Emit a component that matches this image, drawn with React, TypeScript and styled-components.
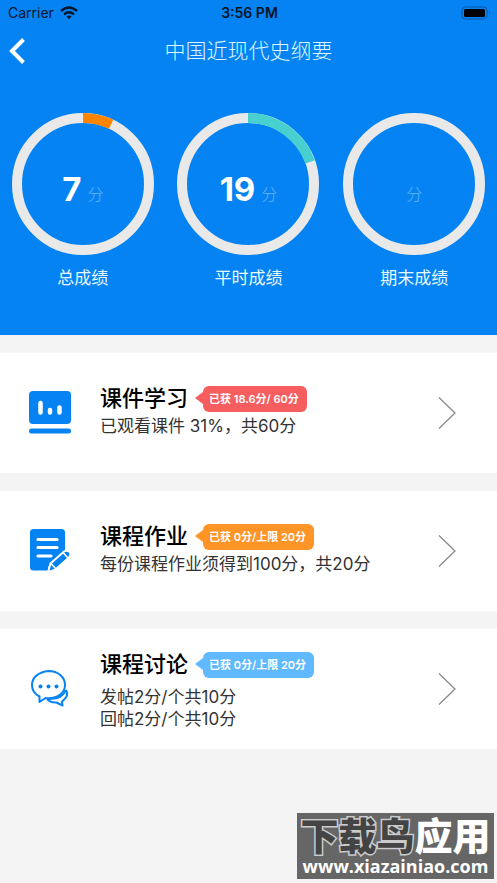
import React from "react";
import styled, { createGlobalStyle } from "styled-components";

const BLUE = "#0683f3";

const GlobalStyle = createGlobalStyle`
  * { box-sizing: border-box; }
  body {
    margin: 0;
    background: #f4f4f4;
    font-family: Inter, "Noto Sans CJK SC", sans-serif;
  }
`;

const Page = styled.div`
  min-height: 100vh;
  background: #f4f4f4;
`;

const Header = styled.header`
  background: ${BLUE};
  padding-bottom: 44px;
`;

const StatusBar = styled.div`
  display: grid;
  grid-template-columns: 1fr auto 1fr;
  align-items: center;
  height: 26px;
  padding: 0 6px 0 8px;
  color: #04152b;
  font-size: 14px;
  line-height: 20px;
`;

const Carrier = styled.div`
  display: flex;
  align-items: center;
  gap: 6px;
`;

const Clock = styled.time`
  font-weight: 600;
`;

const Battery = styled.svg`
  justify-self: end;
`;

const NavBar = styled.nav`
  display: grid;
  grid-template-columns: 40px 1fr 40px;
  align-items: center;
  height: 50px;
`;

const BackButton = styled.button`
  display: flex;
  align-items: center;
  height: 40px;
  padding: 0 0 0 8px;
  border: 0;
  background: none;
  cursor: pointer;
`;

const PageTitle = styled.h1`
  margin: 0;
  text-align: center;
  color: #dcf6ff;
  font-size: 21px;
  font-weight: 300;
  line-height: 30px;
`;

const Scores = styled.section`
  display: grid;
  grid-template-columns: repeat(3, 1fr);
  padding-top: 37px;
`;

const Score = styled.div`
  display: flex;
  flex-direction: column;
  align-items: center;
  gap: 10px;
`;

const Dial = styled.div`
  display: grid;
  place-items: center;
  > * { grid-area: 1 / 1; }
`;

const DialValue = styled.div`
  display: flex;
  align-items: flex-end;
  gap: 6px;
  min-height: 50px;
`;

const Points = styled.strong`
  color: #fff;
  font-size: 33px;
  font-weight: 700;
  line-height: 40px;
`;

const Unit = styled.span`
  color: #68b6fa;
  font-size: 16px;
  font-weight: 300;
  line-height: 30px;
`;

const ScoreLabel = styled.div`
  color: #e6f8ff;
  font-size: 17px;
  line-height: 26px;
`;

const List = styled.main`
  display: grid;
  gap: 18px;
  padding-top: 18px;
`;

const Card = styled.a`
  display: grid;
  grid-template-columns: 100px 1fr 59px;
  min-height: 120px;
  background: #fff;
  color: #333;
  text-decoration: none;
`;

const CardIcon = styled.div`
  display: grid;
  place-items: center;
`;

const CardBody = styled.div<{ $tall?: boolean }>`
  padding: ${(p) => (p.$tall ? "23px 0 18px" : "33px 0")};
`;

const CardArrow = styled.div`
  display: flex;
  align-items: center;
`;

const TitleRow = styled.div`
  display: flex;
  align-items: center;
  gap: 15px;
`;

const CardTitle = styled.h2`
  margin: 0;
  color: #000;
  font-size: 22px;
  font-weight: 500;
  line-height: 24px;
  padding-bottom: 2px;
`;

const Badge = styled.span<{ $color: string }>`
  position: relative;
  padding: 0 8px 0 6px;
  border-radius: 6px;
  background: ${(p) => p.$color};
  color: #fff;
  font-size: 11px;
  font-weight: 600;
  line-height: 26px;
  white-space: nowrap;
  &::before {
    content: "";
    position: absolute;
    right: 100%;
    top: 6px;
    border: solid transparent;
    border-width: 6px 8px 6px 0;
    border-right-color: ${(p) => p.$color};
  }
`;

const Details = styled.div<{ $tall?: boolean }>`
  padding-top: ${(p) => (p.$tall ? "8px" : "3px")};
  font-size: 17px;
  line-height: 22px;
`;

const Watermark = styled.aside`
  position: fixed;
  right: 3px;
  bottom: 4px;
  width: 197px;
  padding: 3px 0;
  background: #666;
  color: #fff;
  text-align: center;
  white-space: nowrap;
`;

const Brand = styled.div`
  font-size: 38px;
  font-weight: 900;
  line-height: 40px;
`;

const BrandDark = styled.span`
  color: #444;
  -webkit-text-stroke: 3px #ccc;
  paint-order: stroke fill;
`;

const Site = styled.div`
  font-family: "Open Sans", sans-serif;
  font-size: 18px;
  font-weight: 700;
  line-height: 20px;
`;

const RADIUS = 66;
const LENGTH = 2 * Math.PI * RADIUS;

function Ring({ percent, color }: { percent: number; color: string }) {
  return (
    <svg width="142" height="142" viewBox="0 0 142 142" fill="none" strokeWidth="10" aria-hidden="true">
      <circle cx="71" cy="71" r={RADIUS} stroke="#e9e9e9" />
      {percent > 0 && (
        <circle
          cx="71"
          cy="71"
          r={RADIUS}
          stroke={color}
          strokeDasharray={`${(LENGTH * percent) / 100} ${LENGTH}`}
          transform="rotate(-90 71 71)"
        />
      )}
    </svg>
  );
}

function CoursewareIcon() {
  return (
    <svg width="44" height="44" viewBox="0 0 44 44" aria-hidden="true">
      <rect x="1" y="0" width="42" height="33" rx="4" fill={BLUE} />
      <rect x="1" y="37.500" width="42" height="5" rx="2.500" fill={BLUE} />
      <g stroke="#fff" strokeWidth="4.500" strokeLinecap="round">
        <path d="M12.500 12v9.500M22 19v2.500M31.500 16.500v5" />
      </g>
    </svg>
  );
}

function HomeworkIcon() {
  return (
    <svg width="44" height="44" viewBox="0 0 44 44" aria-hidden="true">
      <path d="M5.500 0h28A3.500 3.500 0 0 1 37 3.500v21L20 38v3.500H5.500A3.500 3.500 0 0 1 2 38V3.500A3.500 3.500 0 0 1 5.500 0Z" fill={BLUE} />
      <path d="M10 10.500h19M10 18.500h19M10 27h13" stroke="#fff" strokeWidth="3.200" strokeLinecap="round" />
      <path d="M22.500 34.500 36 22.500q3.500-2 5.500.5t-.5 5.500L27.500 40.500 20 43.500Z" fill={BLUE} stroke="#fff" strokeWidth="2" />
      <path d="m35 23.500 5 5.500M23 34.500l5 5.500" stroke="#fff" strokeWidth="1.500" />
    </svg>
  );
}

function DiscussionIcon() {
  return (
    <svg width="44" height="44" viewBox="0 0 44 44" fill="none" stroke={BLUE} strokeWidth="2" strokeLinejoin="round" aria-hidden="true">
      <path d="M20.500 4C11 5 4 10 4 18c0 5 2.500 9 7.500 11.500V35l6-4c1 .3 2 .3 3 .3C30 31.300 37 26 37 18S30 4 20.500 4Z" />
      <path d="M38 23c3 5 0 8.500-4 11.500l.5 4-6-3c-4 .5-7-1-9.500-3" />
      <path d="M20 32c9 .5 15.500-2.500 18-9" />
      <g fill={BLUE} stroke="none">
        <circle cx="12.500" cy="19.500" r="2" />
        <circle cx="20.500" cy="19.500" r="2" />
        <circle cx="28.500" cy="19.500" r="2" />
      </g>
    </svg>
  );
}

function Chevron() {
  return (
    <svg width="18" height="34" viewBox="0 0 18 34" fill="none" stroke="#8a8a8a" strokeWidth="1.300" aria-hidden="true">
      <path d="m1 1.500 16 15.500L1 32.500" />
    </svg>
  );
}

const scores = [
  { label: "总成绩", value: "7", percent: 7, color: "#ff8400" },
  { label: "平时成绩", value: "19", percent: 19.5, color: "#48cfcf" },
  { label: "期末成绩", value: "", percent: 0, color: "#48cfcf" },
];

const items = [
  { title: "课件学习", badge: "已获 18.6分/ 60分", color: "#f65d5f", lines: ["已观看课件 31%，共60分"], Icon: CoursewareIcon },
  { title: "课程作业", badge: "已获 0分/上限 20分", color: "#ff9526", lines: ["每份课程作业须得到100分，共20分"], Icon: HomeworkIcon },
  { title: "课程讨论", badge: "已获 0分/上限 20分", color: "#61b9ff", lines: ["发帖2分/个共10分", "回帖2分/个共10分"], Icon: DiscussionIcon },
];

export default function App() {
  return (
    <Page>
      <GlobalStyle />
      <Header>
        <StatusBar>
          <Carrier>
            Carrier
            <svg width="18" height="14" viewBox="0 0 18 14" fill="none" stroke="#04152b" strokeWidth="2.400" aria-hidden="true">
              <path d="M1 5q8-7 16 0M4 8.300q5-4.300 10 0" />
              <path d="M6.500 10.600q2.500-2 5 0L9 13.200Z" fill="#04152b" stroke="none" />
            </svg>
          </Carrier>
          <Clock>3:56 PM</Clock>
          <Battery width="30" height="14" viewBox="0 0 30 14" aria-hidden="true">
            <rect x="1" y="1" width="25" height="12" rx="3.500" fill="none" stroke="#0755a5" />
            <rect x="3" y="3" width="21" height="8" rx="1.500" fill="#000" />
            <path d="M28 5q1.500 2 0 4Z" fill="#0755a5" />
          </Battery>
        </StatusBar>
        <NavBar>
          <BackButton aria-label="返回">
            <svg width="20" height="26" viewBox="0 0 20 26" fill="none" stroke="#fff" strokeWidth="4" aria-hidden="true">
              <path d="M15.500 1.500 4 13l11.500 11.500" />
            </svg>
          </BackButton>
          <PageTitle>中国近现代史纲要</PageTitle>
        </NavBar>
        <Scores>
          {scores.map((s) => (
            <Score key={s.label}>
              <Dial>
                <Ring percent={s.percent} color={s.color} />
                <DialValue>
                  {s.value && <Points>{s.value}</Points>}
                  <Unit>分</Unit>
                </DialValue>
              </Dial>
              <ScoreLabel>{s.label}</ScoreLabel>
            </Score>
          ))}
        </Scores>
      </Header>
      <List>
        {items.map(({ title, badge, color, lines, Icon }) => {
          const tall = lines.length > 1;
          return (
            <Card href="#" key={title}>
              <CardIcon>
                <Icon />
              </CardIcon>
              <CardBody $tall={tall}>
                <TitleRow>
                  <CardTitle>{title}</CardTitle>
                  <Badge $color={color}>{badge}</Badge>
                </TitleRow>
                <Details $tall={tall}>
                  {lines.map((line) => (
                    <div key={line}>{line}</div>
                  ))}
                </Details>
              </CardBody>
              <CardArrow>
                <Chevron />
              </CardArrow>
            </Card>
          );
        })}
      </List>
      <Watermark>
        <Brand>
          <BrandDark>下载鸟</BrandDark>应用
        </Brand>
        <Site>www.xiazainiao.com</Site>
      </Watermark>
    </Page>
  );
}
